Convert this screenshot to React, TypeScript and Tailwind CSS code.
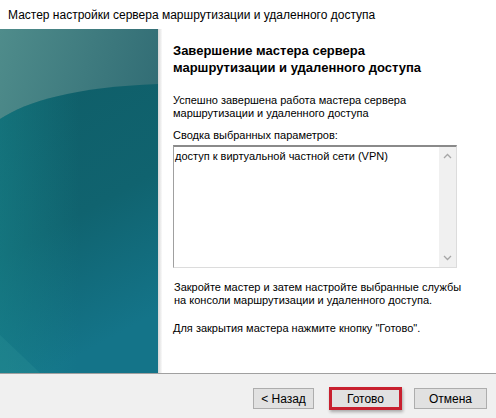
import React from "react";

const font = { fontFamily: '"Liberation Sans", Arial, sans-serif' };

// Teal artwork on the left side of the wizard page
function SideArt() {
  return (
    <svg width="158" height="344" viewBox="0 0 158 344" className="block shrink-0">
      <defs>
        <linearGradient id="topFill" x1="0" y1="0" x2="1" y2="0.6">
          <stop offset="0" stopColor="#4f8c8b" />
          <stop offset="1" stopColor="#2b6670" />
        </linearGradient>
        <linearGradient id="lowFill" x1="0" y1="0" x2="0.3" y2="1">
          <stop offset="0" stopColor="#0f5e68" />
          <stop offset="0.55" stopColor="#10636f" />
          <stop offset="1" stopColor="#147489" />
        </linearGradient>
        <linearGradient id="lowSide" x1="0" y1="0" x2="1" y2="0">
          <stop offset="0" stopColor="#1a8a90" stopOpacity="0.45" />
          <stop offset="0.5" stopColor="#1a8a90" stopOpacity="0" />
        </linearGradient>
      </defs>
      <rect width="158" height="344" fill="url(#topFill)" />
      <path d="M0 90 C 28 72, 75 58, 158 55 L158 344 L0 344 Z" fill="url(#lowFill)" />
      <path d="M0 90 C 28 72, 75 58, 158 55 L158 344 L0 344 Z" fill="url(#lowSide)" />
      <path d="M0 306 L40 344 L0 344 Z" fill="#2a9096" opacity="0.35" />
    </svg>
  );
}

function Chevron({ up }: { up?: boolean }) {
  return (
    <svg width="9" height="6" viewBox="0 0 9 6">
      <path
        d={up ? "M1 5 L4.5 1.5 L8 5" : "M1 1 L4.5 4.5 L8 1"}
        fill="none"
        stroke="#a6a6a6"
        strokeWidth="1.3"
      />
    </svg>
  );
}

export default function App() {
  return (
    <div className="w-[496px] h-[418px] bg-white flex flex-col overflow-hidden" style={font}>
      {/* Title bar */}
      <div className="h-[29px] flex items-center pl-[8px] text-[12px] text-black shrink-0">
        Мастер настройки сервера маршрутизации и удаленного доступа
      </div>

      <div className="flex h-[344px] shrink-0">
        <SideArt />
        <div className="w-[4px] bg-gradient-to-r from-[#d6d6d6] to-[#fafafa]" />

        <div className="flex-1 pl-[11px] pt-[13px] text-[11px] leading-[13px] text-black">
          <h1 className="text-[13px] font-bold leading-[17px]">
            Завершение мастера сервера
            <br />
            маршрутизации и удаленного доступа
          </h1>

          <p className="mt-[18px]">
            Успешно завершена работа мастера сервера
            <br />
            маршрутизации и удаленного доступа
          </p>

          <p className="mt-[9px]">Сводка выбранных параметров:</p>

          <div className="mt-[3px] w-[284px] h-[123px] flex border-t-2 border-l border-t-[#8a8a8a] border-l-[#a0a0a0] border-b border-r border-b-[#dcdcdc] border-r-[#dcdcdc]">
            <div className="flex-1 pl-[1px] pt-[3px]">доступ к виртуальной частной сети (VPN)</div>
            <div className="w-[17px] bg-[#f0f0f0] flex flex-col items-center justify-between py-[6px]">
              <Chevron up />
              <Chevron />
            </div>
          </div>

          <p className="mt-[13px] pl-[1px]">
            Закройте мастер и затем настройте выбранные службы
            <br />
            на консоли маршрутизации и удаленного доступа.
          </p>

          <p className="mt-[15px]">Для закрытия мастера нажмите кнопку "Готово".</p>
        </div>
      </div>

      {/* Button strip */}
      <div className="flex-1 bg-[#f0f0f0] border-t border-[#a0a0a0] flex items-start justify-end pr-[9px] pt-[13px] text-[12px] text-black">
        <div className="mt-[1px] w-[61px] h-[21px] bg-[#e1e1e1] border border-[#adadad] flex items-center justify-center">
          &lt; Назад
        </div>
        <div className="ml-[15px] w-[73px] h-[23px] bg-[#e1e1e1] border-[3px] border-[#c8202f] shadow-[1px_2px_3px_rgba(0,0,0,0.3)] flex items-center justify-center">
          Готово
        </div>
        <div className="ml-[12px] mt-[1px] w-[73px] h-[21px] bg-[#e1e1e1] border border-[#adadad] flex items-center justify-center">
          Отмена
        </div>
      </div>
    </div>
  );
}
